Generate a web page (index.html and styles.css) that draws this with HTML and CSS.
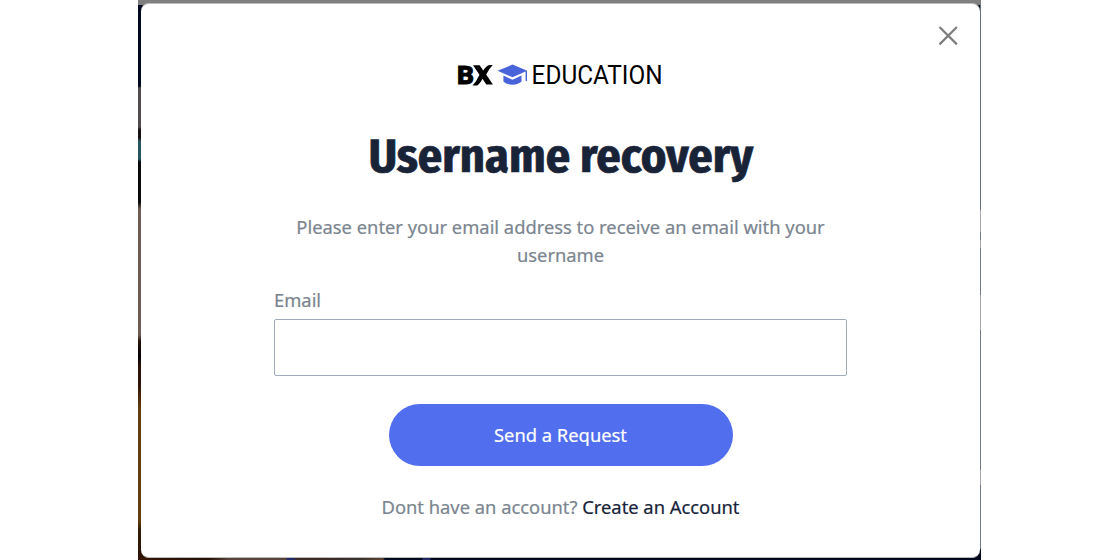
FILE: index.html
```html
<!DOCTYPE html>
<html lang="en">
<head>
<meta charset="utf-8">
<title>Username recovery</title>
<link rel="stylesheet" href="styles.css">
</head>
<body>
<div class="backdrop">
  <main class="modal">
    <button class="close" aria-label="Close">
      <svg width="20" height="20" viewBox="0 0 20 20"><path d="M1.5 1 18.9 18.4M18.9 1 1.5 18.4"/></svg>
    </button>
    <svg class="logo" width="230" height="40" viewBox="-10 -5 230 40">
      <text class="logo-bold" x="1" y="24" textLength="17" lengthAdjust="spacingAndGlyphs">B</text>
      <path class="logo-x" d="M17 5.2H23.6L27.3 10.4Q30.2 5.6 33.7 5H36.7Q33.5 8.2 30.2 14.6L36.9 24.4H30.3L26.5 18.7Q23.9 23.9 21.1 25.4H16.5Q20.5 21.4 23.5 14.7Z"/>
      <path class="cap" d="M41.6 10.8 56.5 4.6 71.2 10.7 56.5 17.3ZM47.4 15.6 56.5 19.8 65.5 15.6V21.6Q62.7 24.7 56.4 24.7T47.4 21.6Z"/>
      <path class="tassel" d="M70.3 11V21"/>
      <text class="logo-text" x="75.6" y="23.9" textLength="131" lengthAdjust="spacingAndGlyphs">EDUCATION</text>
    </svg>
    <h1><svg width="400" height="70" viewBox="0 0 400 70"><text class="title" x="7.7" y="52" textLength="384.5" lengthAdjust="spacingAndGlyphs">Username recovery</text></svg></h1>
    <p class="intro">Please enter your email address to receive an email with your<br>username</p>
    <form class="form">
      <label for="email">Email</label>
      <input id="email" type="email">
      <button class="send" type="button">Send a Request</button>
    </form>
    <p class="signup">Dont have an account? <a>Create an Account</a></p>
  </main>
</div>
</body>
</html>
```
FILE: styles.css
```css
* { box-sizing: border-box; }
body { margin: 0; height: 560px; overflow: hidden; background: #fff; font-family: "Noto Sans", sans-serif; font-size: 18.35px; color: #7b858f; -webkit-text-stroke: 0.2px currentColor; }
.backdrop {
  width: 843px; height: 560px; margin-left: 138px; padding: 3px 1px 2px 3px;
  background:
    linear-gradient(#7f7f7f, #7f7f7f) 0 0 / 100% 5px no-repeat,
    linear-gradient(90deg, #351500 0, #241006 70px, #584239 90px 148px, #222967 149px 156px, #3d2b26 158px 190px, #37302d 220px, #604331 245px, #00091f 247px 284px, #222967 285px 292px, #00061b 293px) 0 100% / 100% 3px no-repeat,
    linear-gradient(#00091f 0 86px, #514c4b 88px 127px, #151111 130px 138px, #28545e 141px 159px, #080a0c 162px 202px, #705c52 209px 335px, #27140b 341px, #050205 356px, #301308 368px 385px, #65400f 410px 520px, #351a07 530px, #2b1204) 0 0 / 9px 100% no-repeat,
    linear-gradient(#686e7c 0 210px, #a7abb0 210px 232px, #737984 232px 240px, #a7abb0 240px 248px, #737984 248px 295px, #a7abb0 295px 330px, #737984 330px 470px, #a7abb0 470px 485px, #737984 485px 548px, #000b20 550px) 100% 0 / 1px 100% no-repeat,
    #000b20;
}
.modal { position: relative; height: 555px; border-radius: 8px; background: #fff; border-top: 1px solid #bbb; border-bottom: 1px solid #bbb; display: flex; flex-direction: column; align-items: center; padding-top: 51px; }
.close { position: absolute; top: 22px; right: 22px; width: 20px; height: 20px; padding: 0; border: 0; background: none; }
.close svg { display: block; fill: none; stroke: #7d7d7d; stroke-width: 2.2; }
.logo { display: block; margin-bottom: 25px; flex: none; }
.logo-bold { font: 900 26.5px Roboto, sans-serif; fill: #000; stroke: #000; stroke-width: 0.8px; }
.logo-x { fill: #000; }
.logo-text { font: 400 25.5px Roboto, sans-serif; fill: #000; }
.cap { fill: #4964db; }
.tassel { fill: none; stroke: #4964db; stroke-width: 1.4; }
h1 { margin: 0; height: 70px; }
h1 svg { display: block; }
.title { font: 700 47.5px "Fira Sans Condensed", "Noto Sans", sans-serif; fill: #192338; stroke: #192338; stroke-width: 0.7px; }
.intro { margin: 23px 0 0; line-height: 27.5px; text-align: center; white-space: nowrap; }
.form { width: 573px; margin-top: 18px; display: flex; flex-direction: column; align-items: center; }
.form label { align-self: flex-start; line-height: 28px; margin-bottom: 5px; }
.form input { width: 573px; height: 57px; border: 1.5px solid #a1acbb; border-radius: 2px; background: #fff; padding: 0 16px; font: inherit; }
.send { width: 344px; height: 62px; margin-top: 28px; padding: 0 0 2px; border: 0; border-radius: 31px; background: #506eee; color: #fff; font: inherit; -webkit-text-stroke: 0.2px #fff; }
.signup { margin: 27px 0 0; line-height: 28px; white-space: nowrap; }
.signup a { color: #172338; -webkit-text-stroke-color: #172338; }
```
